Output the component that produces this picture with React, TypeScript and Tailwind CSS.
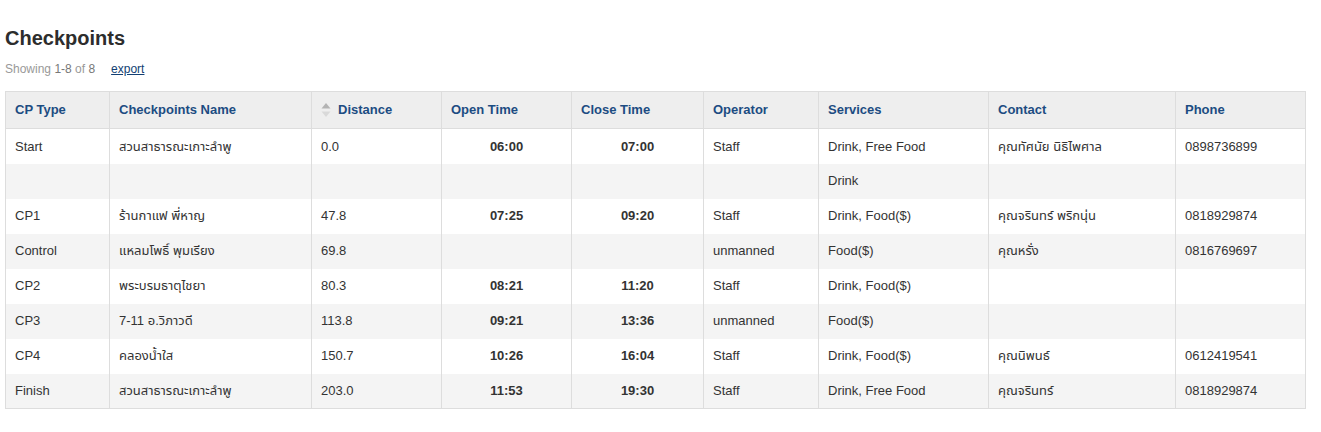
import React from 'react';

type Row = {
  type: string;
  name: string;
  distance: string;
  open: string;
  close: string;
  operator: string;
  services: string;
  contact: string;
  phone: string;
};

const rows: Row[] = [
  { type: 'Start', name: 'สวนสาธารณะเกาะลำพู', distance: '0.0', open: '06:00', close: '07:00', operator: 'Staff', services: 'Drink, Free Food', contact: 'คุณทัศนัย นิธิไพศาล', phone: '0898736899' },
  { type: '', name: '', distance: '', open: '', close: '', operator: '', services: 'Drink', contact: '', phone: '' },
  { type: 'CP1', name: 'ร้านกาแฟ พี่หาญ', distance: '47.8', open: '07:25', close: '09:20', operator: 'Staff', services: 'Drink, Food($)', contact: 'คุณจรินทร์ พริกนุ่น', phone: '0818929874' },
  { type: 'Control', name: 'แหลมโพธิ์ พุมเรียง', distance: '69.8', open: '', close: '', operator: 'unmanned', services: 'Food($)', contact: 'คุณหรั่ง', phone: '0816769697' },
  { type: 'CP2', name: 'พระบรมธาตุไชยา', distance: '80.3', open: '08:21', close: '11:20', operator: 'Staff', services: 'Drink, Food($)', contact: '', phone: '' },
  { type: 'CP3', name: '7-11 อ.วิภาวดี', distance: '113.8', open: '09:21', close: '13:36', operator: 'unmanned', services: 'Food($)', contact: '', phone: '' },
  { type: 'CP4', name: 'คลองน้ำใส', distance: '150.7', open: '10:26', close: '16:04', operator: 'Staff', services: 'Drink, Food($)', contact: 'คุณนิพนธ์', phone: '0612419541' },
  { type: 'Finish', name: 'สวนสาธารณะเกาะลำพู', distance: '203.0', open: '11:53', close: '19:30', operator: 'Staff', services: 'Drink, Free Food', contact: 'คุณจรินทร์', phone: '0818929874' },
];

const SortIcon = () => (
  <svg width="10" height="16" viewBox="0 0 10 16" className="shrink-0">
    <path d="M5 1 L9.5 6.5 L0.5 6.5 Z" fill="#b3b3b3" />
    <path d="M5 15 L9.5 9.5 L0.5 9.5 Z" fill="#d9d9d9" />
  </svg>
);

const th = 'h-[37px] px-[9px] text-left align-middle border border-[#dddddd] font-bold text-[#1c4c82]';
const td = 'h-[35px] px-[9px] align-middle border-x border-[#dddddd]';

export default function App() {
  return (
    <div
      className="bg-white px-[5px] pt-[25px] text-[13px] text-[#333333]"
      style={{ fontFamily: '"Liberation Sans", Arial, "Noto Sans Thai", "Noto Sans", sans-serif' }}
    >
      <h1 className="text-[20px] font-bold leading-[26px] text-[#2d2d2d]">Checkpoints</h1>
      <div className="mt-[10px] flex items-center text-[12px] leading-[16px]">
        <span className="text-[#999999]">
          Showing <span className="text-[#777777]">1-8</span> of <span className="text-[#777777]">8</span>
        </span>
        <a href="#" className="ml-[16px] text-[#123f73] underline">export</a>
      </div>
      <table className="mt-[14px] w-[1300px] border-collapse border border-[#dddddd] table-fixed">
        <colgroup>
          <col className="w-[104px]" />
          <col className="w-[202px]" />
          <col className="w-[130px]" />
          <col className="w-[130px]" />
          <col className="w-[132px]" />
          <col className="w-[115px]" />
          <col className="w-[170px]" />
          <col className="w-[187px]" />
          <col className="w-[130px]" />
        </colgroup>
        <thead>
          <tr className="bg-[#eeeeee]">
            <th className={th}>CP Type</th>
            <th className={th}>Checkpoints Name</th>
            <th className={th}>
              <span className="flex items-center gap-[7px]">
                <SortIcon />
                Distance
              </span>
            </th>
            <th className={th}>Open Time</th>
            <th className={th}>Close Time</th>
            <th className={th}>Operator</th>
            <th className={th}>Services</th>
            <th className={th}>Contact</th>
            <th className={th}>Phone</th>
          </tr>
        </thead>
        <tbody>
          {rows.map((r, i) => (
            <tr key={i} className={i % 2 === 0 ? 'bg-white' : 'bg-[#f4f4f4]'}>
              <td className={td}>{r.type}</td>
              <td className={td}>{r.name}</td>
              <td className={td}>{r.distance}</td>
              <td className={`${td} text-center font-bold`}>{r.open}</td>
              <td className={`${td} text-center font-bold`}>{r.close}</td>
              <td className={td}>{r.operator}</td>
              <td className={td}>{r.services}</td>
              <td className={td}>{r.contact}</td>
              <td className={td}>{r.phone}</td>
            </tr>
          ))}
        </tbody>
      </table>
    </div>
  );
}
